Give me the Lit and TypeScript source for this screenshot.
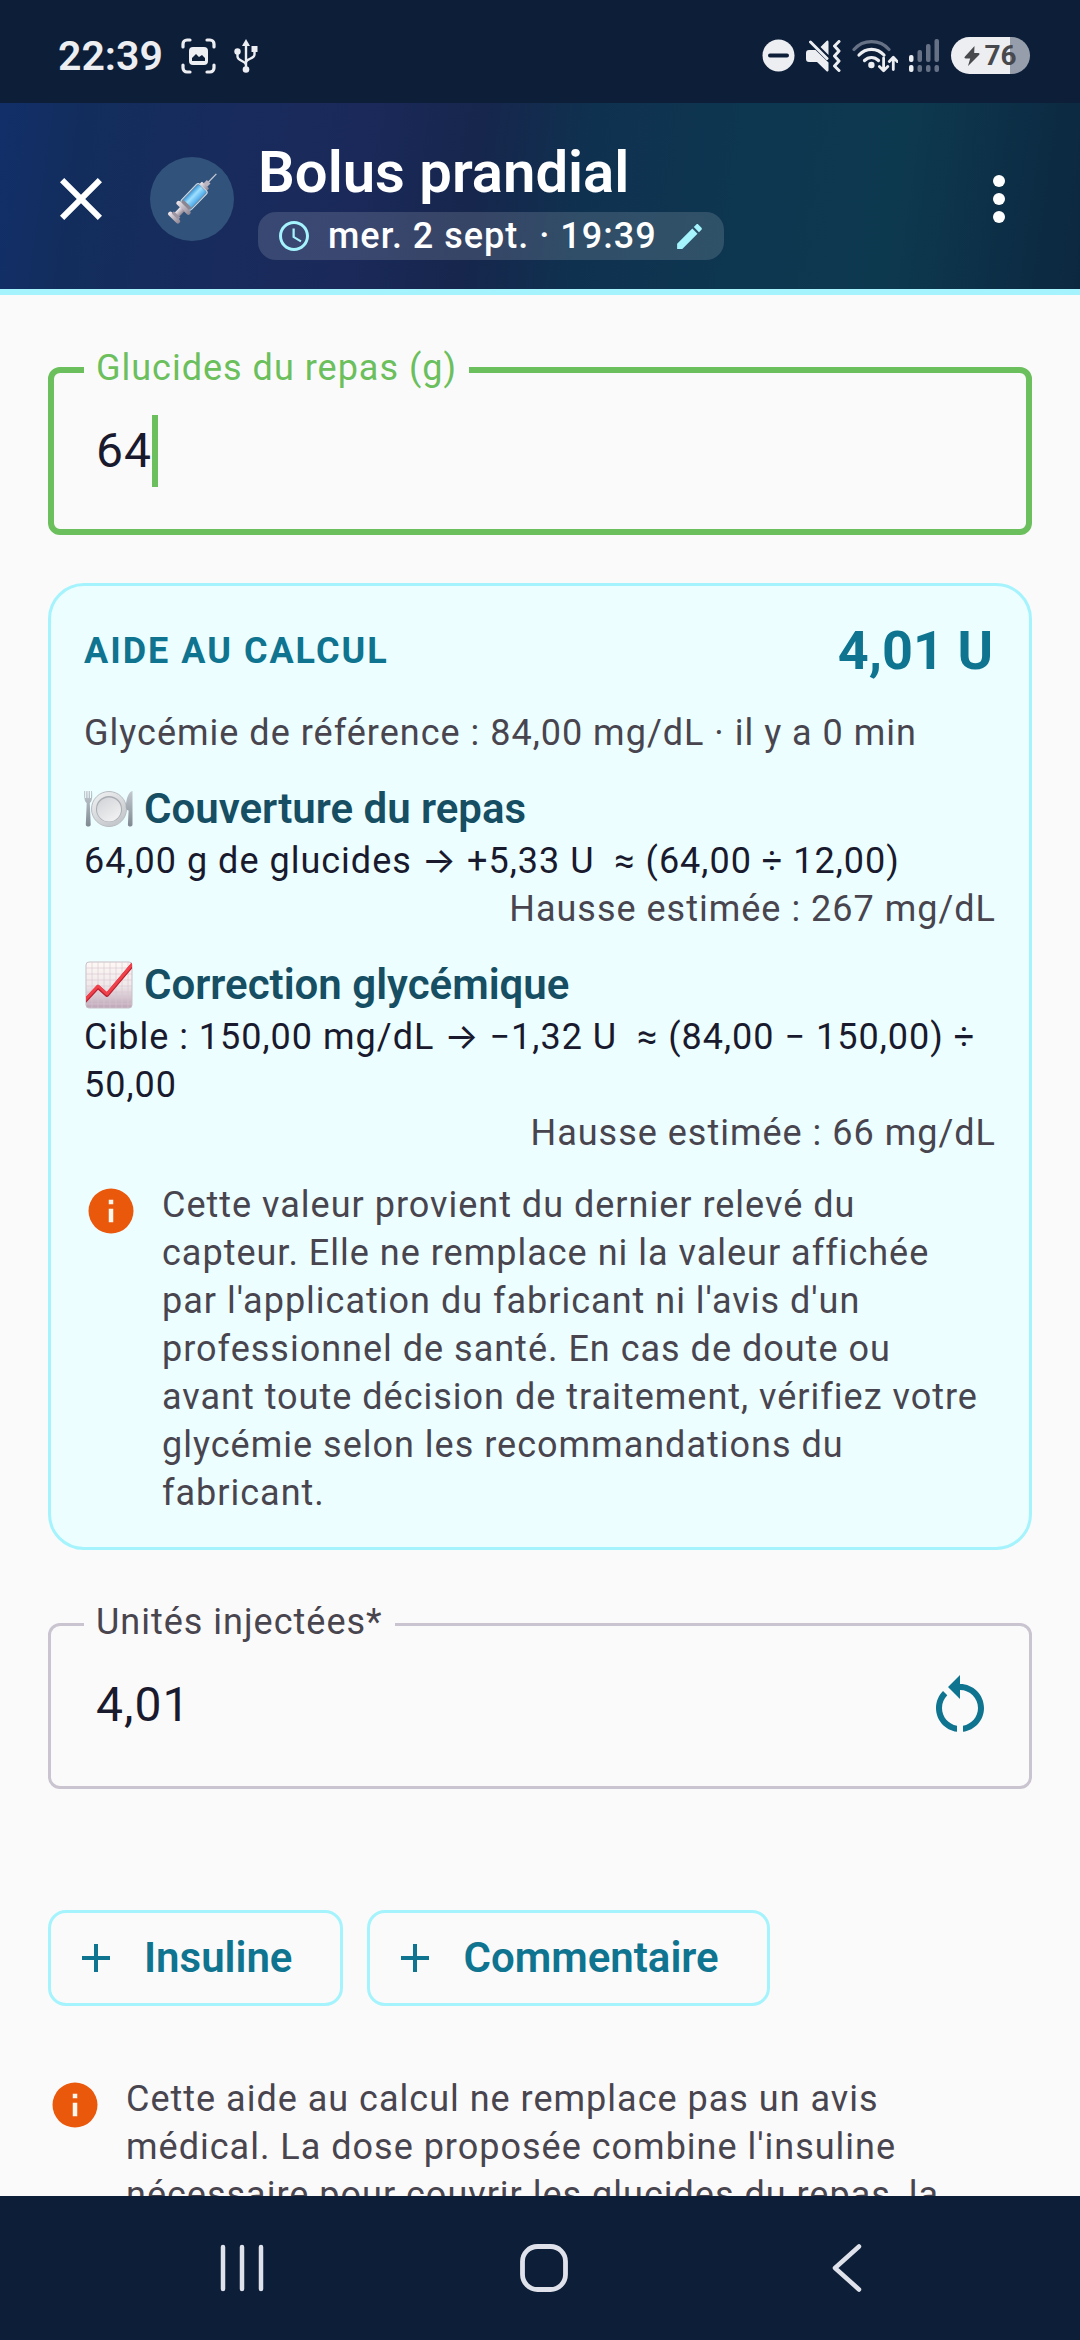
import { LitElement, html, css, svg } from "lit";
import { customElement, property, state } from "lit/decorators.js";

const closeIcon = html`<svg class="ic72" viewBox="0 0 24 24" aria-hidden="true">
  <path fill="currentColor" d="M19 6.41 17.59 5 12 10.59 6.41 5 5 6.41 10.59 12 5 17.59 6.41 19 12 13.41 17.59 19 19 17.59 13.41 12z"/>
</svg>`;

const moreIcon = html`<svg class="ic72" viewBox="0 0 24 24" aria-hidden="true">
  <g fill="currentColor"><circle cx="12" cy="6" r="2"/><circle cx="12" cy="12" r="2"/><circle cx="12" cy="18" r="2"/></g>
</svg>`;

const clockIcon = html`<svg class="ic36" viewBox="0 0 24 24" aria-hidden="true">
  <path fill="currentColor" d="M11.99 2C6.47 2 2 6.48 2 12s4.47 10 9.99 10C17.52 22 22 17.52 22 12S17.52 2 11.99 2zM12 20c-4.42 0-8-3.58-8-8s3.58-8 8-8 8 3.58 8 8-3.58 8-8 8zm.5-13H11v6l5.250 3.150.750-1.230-4.500-2.670z"/>
</svg>`;

const editIcon = html`<svg class="ic33" viewBox="0 0 24 24" aria-hidden="true">
  <path fill="currentColor" d="M3 17.250V21h3.750L17.810 9.940l-3.750-3.750L3 17.250zM20.710 7.040c.390-.390.390-1.020 0-1.410l-2.340-2.340c-.390-.390-1.020-.390-1.410 0l-1.830 1.830 3.750 3.750 1.830-1.830z"/>
</svg>`;

const resetIcon = html`<svg class="ic72" viewBox="0 0 24 24" aria-hidden="true">
  <path fill="currentColor" d="M6 13c0-1.650.670-3.150 1.760-4.240L6.340 7.340C4.900 8.790 4 10.790 4 13c0 4.080 3.050 7.440 7 7.930v-2.020c-2.830-.480-5-2.940-5-5.910zm14 0c0-4.420-3.580-8-8-8-.060 0-.120.010-.180.010l.180-.010V2L8 6l4 4V7c3.310 0 6 2.690 6 6 0 2.970-2.170 5.430-5 5.910v2.020c3.950-.490 7-3.850 7-7.930z"/>
</svg>`;

const plusIcon = html`<svg class="ic48" viewBox="0 0 24 24" aria-hidden="true">
  <path fill="currentColor" d="M19 13h-6v6h-2v-6H5v-2h6V5h2v6h6v2z"/>
</svg>`;

const infoIcon = html`<svg class="ic54" viewBox="0 0 24 24" aria-hidden="true">
  <circle cx="12" cy="12" r="10" fill="#ea580c"/>
  <path fill="#fff7ed" d="M11 7h2v2h-2zM11 11h2v6h-2z"/>
</svg>`;

const plateIcon = html`<svg class="emoji" viewBox="0 0 49 48" aria-hidden="true">
  <defs>
    <linearGradient id="metal" x1="0" y1="0" x2="0" y2="1"><stop offset="0" stop-color="#c3c9cf"/><stop offset="1" stop-color="#7f8992"/></linearGradient>
    <linearGradient id="dish" x1="0" y1="0" x2="0.6" y2="1"><stop offset="0" stop-color="#f2f3f4"/><stop offset="1" stop-color="#c4c7cb"/></linearGradient>
    <linearGradient id="well" x1="0" y1="0" x2="0.7" y2="1"><stop offset="0" stop-color="#cfd2d6"/><stop offset="1" stop-color="#f1f1f2"/></linearGradient>
  </defs>
  <circle cx="25" cy="24" r="17.500" fill="url(#dish)" stroke="#b9bdc2" stroke-width="1"/>
  <circle cx="25" cy="24" r="13" fill="#a9adb3"/>
  <circle cx="25" cy="24.400" r="12" fill="url(#well)"/>
  <path fill="url(#metal)" d="M0 6h1.200v7h1V6h1.400v7h1V6h1.400v7h1V6H8c.5 6 .3 10-2.200 12l.9 21.500c.1 2.700-5 2.700-4.900 0L2.700 18C.3 16 .1 12 0 6z"/>
  <path fill="url(#metal)" d="M48.500 6v33.500c0 2.700-4.700 2.700-4.600 0l.7-14c-2.800-.8-3.100-3-2.600-6.500C42.700 13 44.500 7 48.500 6z"/>
</svg>`;

const chartIcon = html`<svg class="emoji" viewBox="0 0 49 48" aria-hidden="true">
  <defs>
    <linearGradient id="sheet" x1="0" y1="0" x2="0" y2="1"><stop offset="0" stop-color="#fdf8f5"/><stop offset="0.5" stop-color="#efe9ea"/><stop offset="1" stop-color="#bda6b8"/></linearGradient>
    <clipPath id="sheetClip"><rect x="2" y="1" width="46" height="46" rx="3"/></clipPath>
  </defs>
  <rect x="2" y="1" width="46" height="46" rx="3" fill="url(#sheet)" stroke="#c9bfc6" stroke-width="1"/>
  <path stroke="#d8c4cf" stroke-width="1" fill="none" d="M8 1v46M14 1v46M20 1v46M26 1v46M32 1v46M38 1v46M44 1v46M2 7h46M2 13h46M2 19h46M2 25h46M2 31h46M2 37h46M2 43h46" opacity="0.6"/>
  <g clip-path="url(#sheetClip)">
    <path fill="none" stroke="#b91f2e" stroke-width="4" stroke-linejoin="round" d="M0 41 14 26l9 8L50 2"/>
    <path fill="none" stroke="#f0404a" stroke-width="3" stroke-linejoin="round" d="M0 40 14 25l9 8L50 1"/>
  </g>
</svg>`;

const syringeIcon = html`<svg class="syringe" viewBox="0 0 54 54" aria-hidden="true">
  <defs>
    <linearGradient id="fluid" x1="0" y1="0" x2="0" y2="1"><stop offset="0" stop-color="#3f9fe0"/><stop offset="0.4" stop-color="#9fe0ff"/><stop offset="1" stop-color="#4aa8ea"/></linearGradient>
    <linearGradient id="plunger" x1="0" y1="0" x2="0" y2="1"><stop offset="0" stop-color="#f1e9ee"/><stop offset="1" stop-color="#8d8592"/></linearGradient>
  </defs>
  <g transform="rotate(-46 27 27)">
    <rect x="50" y="26.400" width="12" height="1.300" fill="#c4c8d4"/>
    <path d="M46 24.500h5v5h-5z" fill="#b9b4c0"/>
    <rect x="42.500" y="22" width="4" height="10" rx="1" fill="url(#plunger)"/>
    <rect x="17" y="20" width="26" height="14" rx="2.500" fill="#6f8da8" stroke="#c9dcea" stroke-width="1"/>
    <rect x="20" y="21.500" width="22" height="11" rx="1.500" fill="url(#fluid)"/>
    <rect x="16.500" y="21.500" width="4" height="11" rx="1" fill="#8a8792"/>
    <rect x="12.500" y="18" width="4.500" height="18" rx="2" fill="url(#plunger)"/>
    <rect x="4" y="24" width="9" height="6" fill="url(#plunger)"/>
    <rect x="-1" y="19.500" width="4.500" height="15" rx="2" fill="url(#plunger)"/>
    <rect x="2.500" y="22.500" width="3" height="9" fill="#9d95a3"/>
  </g>
</svg>`;

/** Phone status bar: clock on the left, system indicators on the right. */
@customElement("status-bar")
class StatusBar extends LitElement {
  static styles = css`
    :host { display: block; flex: none; }
    .bar { display: flex; align-items: center; justify-content: space-between; height: 103px; padding: 8px 50px 0 58px; box-sizing: border-box; background: #0d1e38; color: #eceef2; }
    .side { display: flex; align-items: center; gap: 18px; }
    .right { gap: 11px; }
    .time { font-size: 41px; line-height: 48px; font-weight: 600; }
    svg { display: block; flex: none; }
    .battery { display: flex; align-items: center; justify-content: center; gap: 4px; width: 79px; height: 37px; border-radius: 19px; background: linear-gradient(to right, #eceef2 75%, #969eac 75%); color: #48494c; font-size: 28px; line-height: 32px; font-weight: 700; }
  `;

  render() {
    const bars = [16, 11, 5, 0];
    return html`<div class="bar">
      <div class="side">
        <span class="time">22:39</span>
        <svg width="35" height="36" viewBox="0 0 35 36" aria-hidden="true">
          <path fill="none" stroke="currentColor" stroke-width="3.200" stroke-linecap="round" d="M2 9V6a4 4 0 0 1 4-4h3M26 2h3a4 4 0 0 1 4 4v3M33 27v3a4 4 0 0 1-4 4h-3M9 34H6a4 4 0 0 1-4-4v-3"/>
          <rect x="8" y="9" width="19" height="18" rx="4" fill="currentColor"/>
          <path fill="#0d1e38" d="M11 23v-3l4-4 3 3 3-2 3 3v3z"/>
        </svg>
        <svg width="24" height="34" viewBox="0 0 24 34" aria-hidden="true">
          <path fill="none" stroke="currentColor" stroke-width="2.400" d="M12 5v24M3.500 13v4.500c0 4.500 8.500 4.500 8.500 8.500M20.500 10v5.500c0 4.500-8.500 4-8.500 8"/>
          <path fill="currentColor" d="M12 0l4 7H8z"/>
          <circle cx="3.500" cy="12.500" r="3.200" fill="currentColor"/>
          <rect x="17.500" y="7" width="6" height="6" fill="currentColor"/>
          <circle cx="12" cy="30.500" r="3.300" fill="currentColor"/>
        </svg>
      </div>
      <div class="side right">
        <svg width="33" height="33" viewBox="0 0 33 33" aria-hidden="true">
          <circle cx="16.500" cy="16.500" r="16" fill="currentColor"/><rect x="6" y="14.500" width="21" height="4" rx="2" fill="#0d1e38"/>
        </svg>
        <svg width="35" height="32" viewBox="0 0 35 32" aria-hidden="true">
          <path fill="currentColor" d="M3 10h6.500L22.500 22.500V30c0 1.500-1 2-2.200 1L11 22H3c-2 0-3-1-3-3v-6c0-2 1-3 3-3zM14.500 7l6-6c1-1 2-.5 2 1v13z"/>
          <path fill="none" stroke="currentColor" stroke-width="3" stroke-linecap="round" stroke-linejoin="round" d="M4.500 2 21 18.500M33 1.500 28.500 6l4.500 5-4.500 5 4.500 5-4.500 5 4.500 4.500"/>
        </svg>
        <svg width="46" height="34" viewBox="0 0 46 34" aria-hidden="true">
          <g fill="none" stroke="currentColor" stroke-width="3.200" stroke-linecap="round">
            <path d="M2 10.500c9-10.500 26-10.500 35 0" stroke="#667185"/>
            <path d="M7 16c7-7.500 18-7.500 25 0M12.500 21.500c4-4 10-4 14 0"/>
            <path stroke-width="2.800" stroke-linejoin="round" d="M31.600 19v12.500m-4.200-4 4.200 4.200 4.200-4.200M41.300 30.500V18.500m-4 4 4-4.200 4 4.200"/>
          </g>
          <circle cx="19.400" cy="26" r="3.200" fill="currentColor"/>
        </svg>
        <svg width="31" height="33" viewBox="0 0 31 33" aria-hidden="true">
          ${bars.map((top, i) => svg`<g fill=${i === 0 ? "#eceef2" : "#667185"}>
            <rect x=${i * 8.5} y=${top} width="4.500" height=${23 - top} rx="2"/>
            <rect x=${i * 8.5} y="26" width="4.500" height="7" rx="2"/></g>`)}
        </svg>
        <div class="battery">
          <svg width="16" height="20" viewBox="0 0 16 20" aria-hidden="true"><path fill="currentColor" d="M10.500 0 1 10.500c-1 1-.5 2 .8 2h4.400L4 20 15 9c1-1 .7-2-.8-2h-4z"/></svg>
          <span>76</span>
        </div>
      </div>
    </div>`;
  }
}

/** Outlined text field with its label set into the top border. */
@customElement("outlined-field")
class OutlinedField extends LitElement {
  @property() label = "";
  @property() value = "";
  @property({ type: Boolean }) active = false;
  @property({ type: Boolean }) resettable = false;

  static styles = css`
    :host { display: block; }
    .field { margin: 0; padding: 0 45px 24px; min-width: 0; border: 3px solid #cac4d0; border-radius: 12px; color: #49454f; }
    .field.active { padding: 0 42px 21px; border: 6px solid #6bbf5c; color: #6bbf5c; }
    legend { margin-left: -12px; padding: 0 12px 4px; font-size: 36px; line-height: 44px; letter-spacing: 1px; }
    .row { display: flex; align-items: center; height: 114px; }
    input { flex: 1; min-width: 0; height: 72px; margin: 0; padding: 0; border: 0; outline: 0; background: transparent; color: #1a1a2e; font: inherit; font-size: 48px; line-height: 72px; letter-spacing: 1px; caret-color: transparent; }
    .active input { flex: none; field-sizing: content; }
    .caret { width: 6px; height: 72px; background: #6bbf5c; }
    button { display: flex; padding: 0; border: 0; background: none; color: #0e7490; }
    .ic72 { display: block; width: 72px; height: 72px; margin-right: -12px; }
  `;

  render() {
    return html`<fieldset class=${this.active ? "field active" : "field"}>
      <legend><label for="value">${this.label}</label></legend>
      <div class="row">
        <input id="value" type="text" inputmode="decimal" .value=${this.value} />
        ${this.active ? html`<span class="caret"></span>` : ""}
        ${this.resettable ? html`<button type="button" aria-label="Réinitialiser">${resetIcon}</button>` : ""}
      </div>
    </fieldset>`;
  }
}

@customElement("info-notice")
class InfoNotice extends LitElement {
  static styles = css`
    :host { display: flex; align-items: flex-start; gap: 24px; padding-right: 8px; color: #49454f; font-size: 36px; line-height: 48px; letter-spacing: 1px; }
    .ic54 { display: block; flex: none; width: 54px; height: 54px; margin-top: 3px; }
    p { flex: 1; margin: 0; }
  `;
  render() {
    return html`${infoIcon}<p><slot></slot></p>`;
  }
}

@customElement("app-root")
class AppRoot extends LitElement {
  @state() private carbs = "64";
  @state() private units = "4,01";

  static styles = css`
    :host { display: flex; flex-direction: column; height: 100vh; overflow: hidden; background: #fafafa; color: #1a1a2e; font-family: Roboto, Inter, "Noto Sans", sans-serif; }
    button { font: inherit; letter-spacing: inherit; border: 0; background: none; padding: 0; color: inherit; }
    svg { display: block; flex: none; }
    h1, h2, h3, p { margin: 0; }
    .ic72 { width: 72px; height: 72px; }
    .ic48 { width: 48px; height: 48px; }
    .ic36 { width: 36px; height: 36px; }
    .ic33 { width: 33px; height: 33px; }
    .emoji { width: 49px; height: 48px; }
    .syringe { width: 54px; height: 54px; }

    .top { display: flex; align-items: center; flex: none; height: 192px; box-sizing: border-box; padding: 6px 45px 0; border-bottom: 6px solid #a5f3fc; color: #fff;
      background: linear-gradient(98deg, #122f6a 0%, #122d5c 8%, #182b5c 22%, #1a295a 33%, #16264c 44%, #0f3150 54%, #0d3650 68%, #0d394f 82%, #0c2c44 95%, #0c2840 100%); }
    .avatar { display: grid; place-items: center; flex: none; width: 84px; height: 84px; margin: 0 24px 0 33px; border-radius: 50%; background: #31527a; }
    .heading { display: flex; flex-direction: column; align-items: flex-start; gap: 6px; flex: 1; }
    .title { font-size: 58px; line-height: 68px; font-weight: 600; }
    .date { display: flex; align-items: center; gap: 16px; height: 48px; padding: 0 18px; border-radius: 18px; background: rgba(255, 255, 255, 0.14); color: #a5f3fc; }
    .date span { color: #fff; font-size: 36px; line-height: 48px; font-weight: 500; letter-spacing: 1px; }

    main { display: flex; flex-direction: column; flex: 1; min-height: 0; overflow: hidden; padding: 51px 48px 0; }
    main > * { flex: none; }
    .card { margin: 48px 0 50px; padding: 30px 33px; border: 3px solid #a5f3fc; border-radius: 36px; background: #ecfeff; }
    .total { display: flex; align-items: center; justify-content: space-between; margin-bottom: 24px; padding-right: 3px; color: #0e7490; }
    .total h2 { font-size: 36px; line-height: 48px; font-weight: 700; letter-spacing: 2px; }
    .total output { font-size: 54px; line-height: 69px; font-weight: 700; }
    .small { font-size: 36px; line-height: 48px; letter-spacing: 1px; }
    .muted { color: #49454f; }
    .end { text-align: right; }
    .block { margin-bottom: 24px; }
    .block h3 { display: flex; align-items: center; gap: 11px; font-size: 42px; line-height: 56px; font-weight: 600; color: #164e63; }
    .formula { white-space: pre-wrap; }

    .chips { display: flex; gap: 24px; margin: 121px 0 69px; }
    .chip { display: flex; align-items: center; gap: 24px; height: 96px; padding: 0 48px 0 21px; box-sizing: border-box; border: 3px solid #a5f3fc; border-radius: 18px; color: #0e7490; font-size: 42px; line-height: 60px; font-weight: 600; }

    .nav { display: flex; flex: none; height: 144px; padding: 0 82px 0 91px; background: #0d1e38; color: #dfe2ea; }
    .nav button { flex: 1; display: grid; place-items: center; }
  `;

  render() {
    return html`
      <status-bar></status-bar>
      <header class="top">
        <button type="button" aria-label="Fermer">${closeIcon}</button>
        <div class="avatar">${syringeIcon}</div>
        <div class="heading">
          <h1 class="title">Bolus prandial</h1>
          <button type="button" class="date">${clockIcon}<span>mer. 2 sept. · 19:39</span>${editIcon}</button>
        </div>
        <button type="button" aria-label="Plus d'options">${moreIcon}</button>
      </header>
      <main>
        <outlined-field active label="Glucides du repas (g)" .value=${this.carbs}></outlined-field>
        <section class="card">
          <div class="total"><h2>AIDE AU CALCUL</h2><output>4,01 U</output></div>
          <p class="small muted block">Glycémie de référence : 84,00 mg/dL · il y a 0 min</p>
          <div class="block">
            <h3>${plateIcon}<span>Couverture du repas</span></h3>
            <p class="small formula">64,00 g de glucides → +5,33 U  ≈ (64,00 ÷ 12,00)</p>
            <p class="small muted end">Hausse estimée : 267 mg/dL</p>
          </div>
          <div class="block">
            <h3>${chartIcon}<span>Correction glycémique</span></h3>
            <p class="small formula">Cible : 150,00 mg/dL → −1,32 U  ≈ (84,00 − 150,00) ÷ 50,00</p>
            <p class="small muted end">Hausse estimée : 66 mg/dL</p>
          </div>
          <info-notice>Cette valeur provient du dernier relevé du capteur. Elle ne remplace ni la valeur affichée par l'application du fabricant ni l'avis d'un professionnel de santé. En cas de doute ou avant toute décision de traitement, vérifiez votre glycémie selon les recommandations du fabricant.</info-notice>
        </section>
        <outlined-field resettable label="Unités injectées*" .value=${this.units}></outlined-field>
        <div class="chips">
          <button type="button" class="chip">${plusIcon}Insuline</button>
          <button type="button" class="chip">${plusIcon}Commentaire</button>
        </div>
        <info-notice>Cette aide au calcul ne remplace pas un avis médical. La dose proposée combine l'insuline nécessaire pour couvrir les glucides du repas, la</info-notice>
      </main>
      <nav class="nav">
        <button type="button" aria-label="Applications récentes">
          <svg width="44" height="48" viewBox="0 0 44 48"><path stroke="currentColor" stroke-width="4.500" stroke-linecap="round" d="M3 3v42M22 3v42M41 3v42"/></svg>
        </button>
        <button type="button" aria-label="Accueil">
          <svg width="48" height="48" viewBox="0 0 48 48"><rect x="2.500" y="2.500" width="43" height="43" rx="15" fill="none" stroke="currentColor" stroke-width="4.800"/></svg>
        </button>
        <button type="button" aria-label="Retour">
          <svg width="30" height="48" viewBox="0 0 30 48"><path fill="none" stroke="currentColor" stroke-width="4.500" stroke-linecap="round" stroke-linejoin="round" d="M27 2.500 3 24l24 21.500"/></svg>
        </button>
      </nav>
    `;
  }
}
